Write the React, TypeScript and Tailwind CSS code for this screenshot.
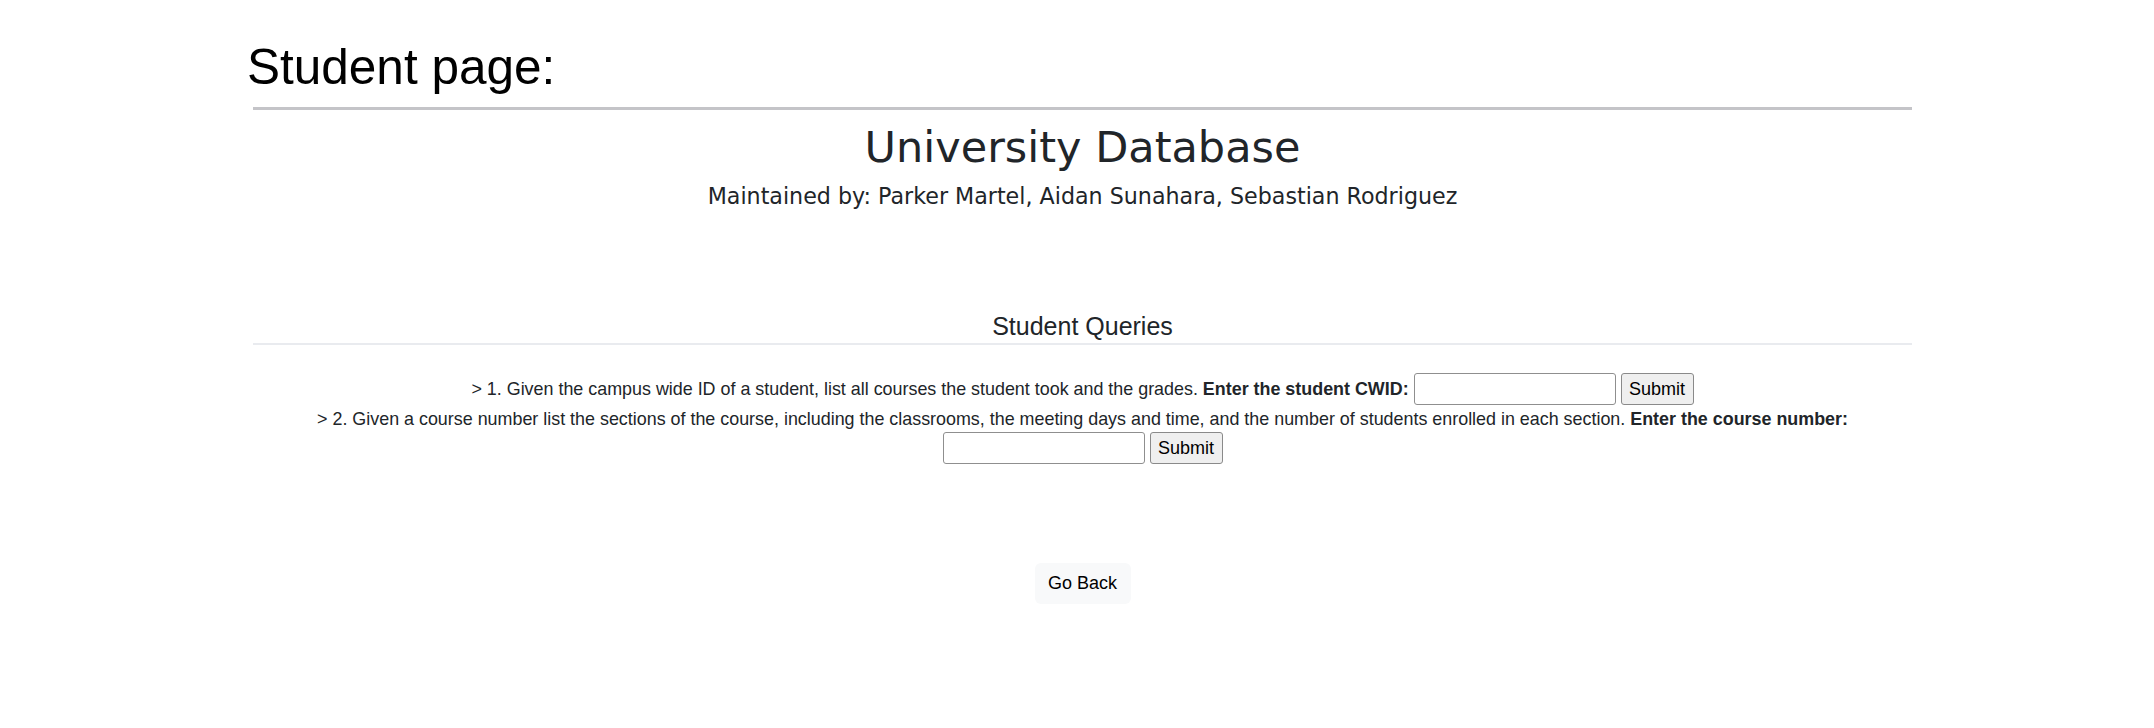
import React from "react";

const sans = { fontFamily: '"Liberation Sans", Arial, sans-serif' };

function QueryInput() {
  return (
    <span className="flex items-center gap-[5px]">
      <input
        type="text"
        className="h-[32px] w-[202px] rounded-[3px] border border-[#8f8f8f] bg-white px-2 text-[18px] outline-none"
      />
      <button
        type="button"
        className="h-[32px] w-[73px] rounded-[3px] border border-[#8a8a8a] bg-[#efefef] text-[18px] text-black"
      >
        Submit
      </button>
    </span>
  );
}

export default function App() {
  return (
    <div className="h-[728px] overflow-hidden bg-white pt-[39px]" style={sans}>
      <h1 className="ml-[247px] text-[49.5px] font-normal leading-[56px] text-black">
        Student page:
      </h1>

      <div className="ml-[253px] mt-[12px] w-[1659px]">
        <div className="h-[3px] bg-[#c4c4c8]" />

        <header className="text-center text-[#212529]">
          <h2 className="mt-[12px] font-['DejaVu_Sans',Verdana,sans-serif] text-[43px] font-normal leading-[50px]">
            University Database
          </h2>
          <p className="mt-[10px] font-['DejaVu_Sans',Verdana,sans-serif] text-[22.2px] leading-[28px]">
            Maintained by: Parker Martel, Aidan Sunahara, Sebastian Rodriguez
          </p>
        </header>

        <section className="mt-[101px] text-[#212529]">
          <h3 className="text-center text-[25px] font-normal leading-[30px]">Student Queries</h3>
          <div className="mt-[2px] h-[2px] bg-[#e9ebef]" />

          <div className="mt-[28px] flex items-center justify-center text-[17.9px]">
            <span className="whitespace-pre">
              {"> 1. Given the campus wide ID of a student, list all courses the student took and the grades. "}
            </span>
            <b className="mr-[5px] font-bold">Enter the student CWID:</b>
            <QueryInput />
          </div>

          <p className="mt-[3px] text-center text-[17.9px] leading-[22px]">
            {"> 2. Given a course number list the sections of the course, including the classrooms, the meeting days and time, and the number of students enrolled in each section. "}
            <b className="font-bold">Enter the course number:</b>
          </p>
          <div className="mt-[2px] flex justify-center">
            <QueryInput />
          </div>

          <div className="mt-[99px] flex justify-center">
            <button
              type="button"
              className="h-[41px] w-[96px] rounded-[6px] bg-[#f8f9fa] text-[18px] text-black"
            >
              Go Back
            </button>
          </div>
        </section>
      </div>
    </div>
  );
}
